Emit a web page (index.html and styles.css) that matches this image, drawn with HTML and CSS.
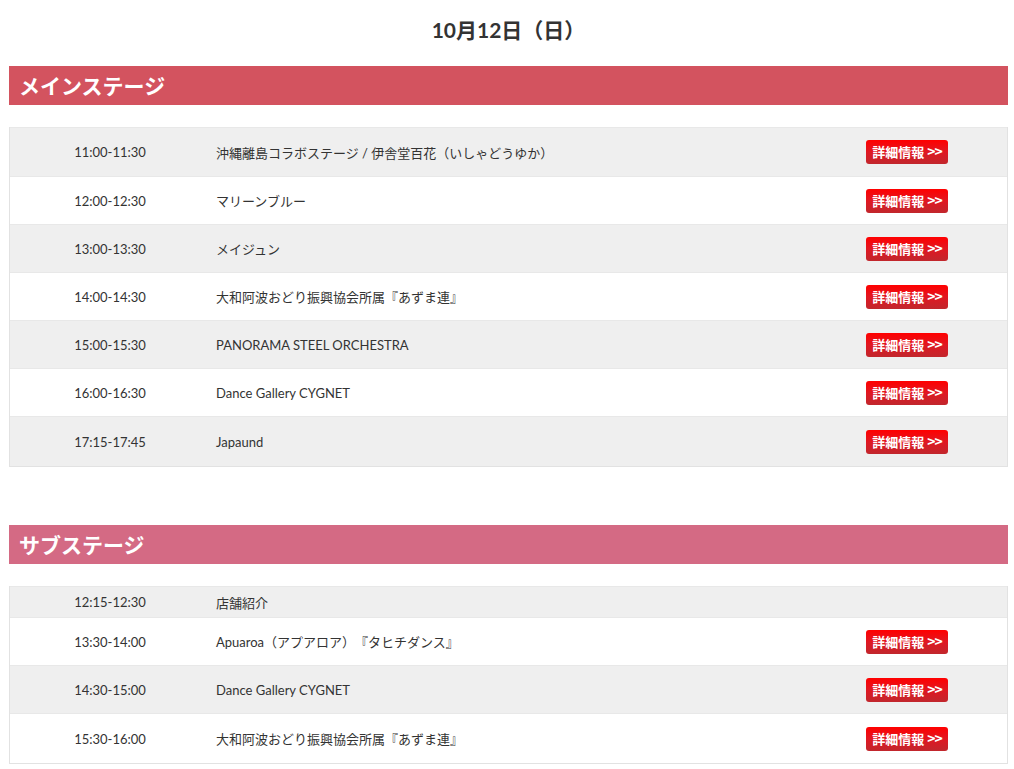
FILE: index.html
```html
<!DOCTYPE html>
<html lang="ja">
<head>
<meta charset="utf-8">
<link rel="stylesheet" href="styles.css">
</head>
<body>
<div class="page">
  <h1 class="date">10月12日（日）</h1>

  <section class="stage">
    <h2 class="stage-title main">メインステージ</h2>
    <div class="table">
      <div class="row"><div class="time">11:00-11:30</div><div class="name">沖縄離島コラボステージ / 伊舎堂百花（いしゃどうゆか）</div><div class="act"><a class="btn">詳細情報 <span class="arr">&gt;&gt;</span></a></div></div>
      <div class="row"><div class="time">12:00-12:30</div><div class="name">マリーンブルー</div><div class="act"><a class="btn">詳細情報 <span class="arr">&gt;&gt;</span></a></div></div>
      <div class="row"><div class="time">13:00-13:30</div><div class="name">メイジュン</div><div class="act"><a class="btn">詳細情報 <span class="arr">&gt;&gt;</span></a></div></div>
      <div class="row"><div class="time">14:00-14:30</div><div class="name">大和阿波おどり振興協会所属『あずま連』</div><div class="act"><a class="btn">詳細情報 <span class="arr">&gt;&gt;</span></a></div></div>
      <div class="row"><div class="time">15:00-15:30</div><div class="name">PANORAMA STEEL ORCHESTRA</div><div class="act"><a class="btn">詳細情報 <span class="arr">&gt;&gt;</span></a></div></div>
      <div class="row"><div class="time">16:00-16:30</div><div class="name">Dance Gallery CYGNET</div><div class="act"><a class="btn">詳細情報 <span class="arr">&gt;&gt;</span></a></div></div>
      <div class="row"><div class="time">17:15-17:45</div><div class="name">Japaund</div><div class="act"><a class="btn">詳細情報 <span class="arr">&gt;&gt;</span></a></div></div>
    </div>
  </section>

  <section class="stage">
    <h2 class="stage-title sub">サブステージ</h2>
    <div class="table">
      <div class="row short"><div class="time">12:15-12:30</div><div class="name">店舗紹介</div><div class="act"></div></div>
      <div class="row"><div class="time">13:30-14:00</div><div class="name">Apuaroa（アプアロア）『タヒチダンス』</div><div class="act"><a class="btn">詳細情報 <span class="arr">&gt;&gt;</span></a></div></div>
      <div class="row"><div class="time">14:30-15:00</div><div class="name">Dance Gallery CYGNET</div><div class="act"><a class="btn">詳細情報 <span class="arr">&gt;&gt;</span></a></div></div>
      <div class="row"><div class="time">15:30-16:00</div><div class="name">大和阿波おどり振興協会所属『あずま連』</div><div class="act"><a class="btn">詳細情報 <span class="arr">&gt;&gt;</span></a></div></div>
    </div>
  </section>
</div>
</body>
</html>
```

FILE: styles.css
```css
html, body {
  margin: 0;
  padding: 0;
  background: #fff;
}
body {
  font-family: "Lato", "Noto Sans CJK JP", sans-serif;
  color: #333;
  font-size: 13px;
  text-spacing-trim: space-all;
}
.page {
  padding: 0 6px 0 9px;
}
.date {
  margin: 0;
  padding-top: 16px;
  height: 66px;
  box-sizing: border-box;
  text-align: center;
  font-size: 21px;
  font-weight: bold;
  line-height: 28px;
  color: #333;
}
.stage {
  margin-bottom: 58px;
}
.stage-title {
  margin: 0 0 22px;
  height: 39px;
  line-height: 39px;
  padding: 0 10px;
  color: #fff;
  font-size: 21px;
  font-weight: bold;
}
.stage-title.main { background: #d3535f; }
.stage-title.sub { background: #d46a84; }
.table {
  border: 1px solid #e2e2e2;
  border-top: none;
}
.row {
  display: flex;
  align-items: center;
  height: 48px;
  border-bottom: 1px solid #e8e8e8;
  box-sizing: border-box;
  background: #fff;
}
.row:last-child { border-bottom: none; height: 49px; }
.row:nth-child(odd) { background: #efefef; }
.table .row:first-child { height: 50px; border-top: 1px solid #e8e8e8; }
.table .row.short { height: 32px; }
.time {
  width: 200px;
  text-align: center;
}
.name {
  flex: 1;
  padding-left: 6px;
}
.act {
  width: 141px;
  display: flex;
  justify-content: flex-start;
}
.btn {
  display: inline-block;
  width: 82px;
  height: 24px;
  line-height: 23px;
  box-sizing: border-box;
  border-radius: 3px;
  background: linear-gradient(to bottom, #ff0000 0%, #e01822 50%, #c1272d 100%);
  color: #fff;
  font-family: "Noto Sans CJK JP", sans-serif;
  font-weight: bold;
  font-size: 13px;
  text-align: center;
  text-decoration: none;
  white-space: nowrap;
}
.arr {
  font-family: "Noto Sans CJK JP", sans-serif;
  font-weight: bold;
  font-size: 14px;
  letter-spacing: -1px;
}
```
